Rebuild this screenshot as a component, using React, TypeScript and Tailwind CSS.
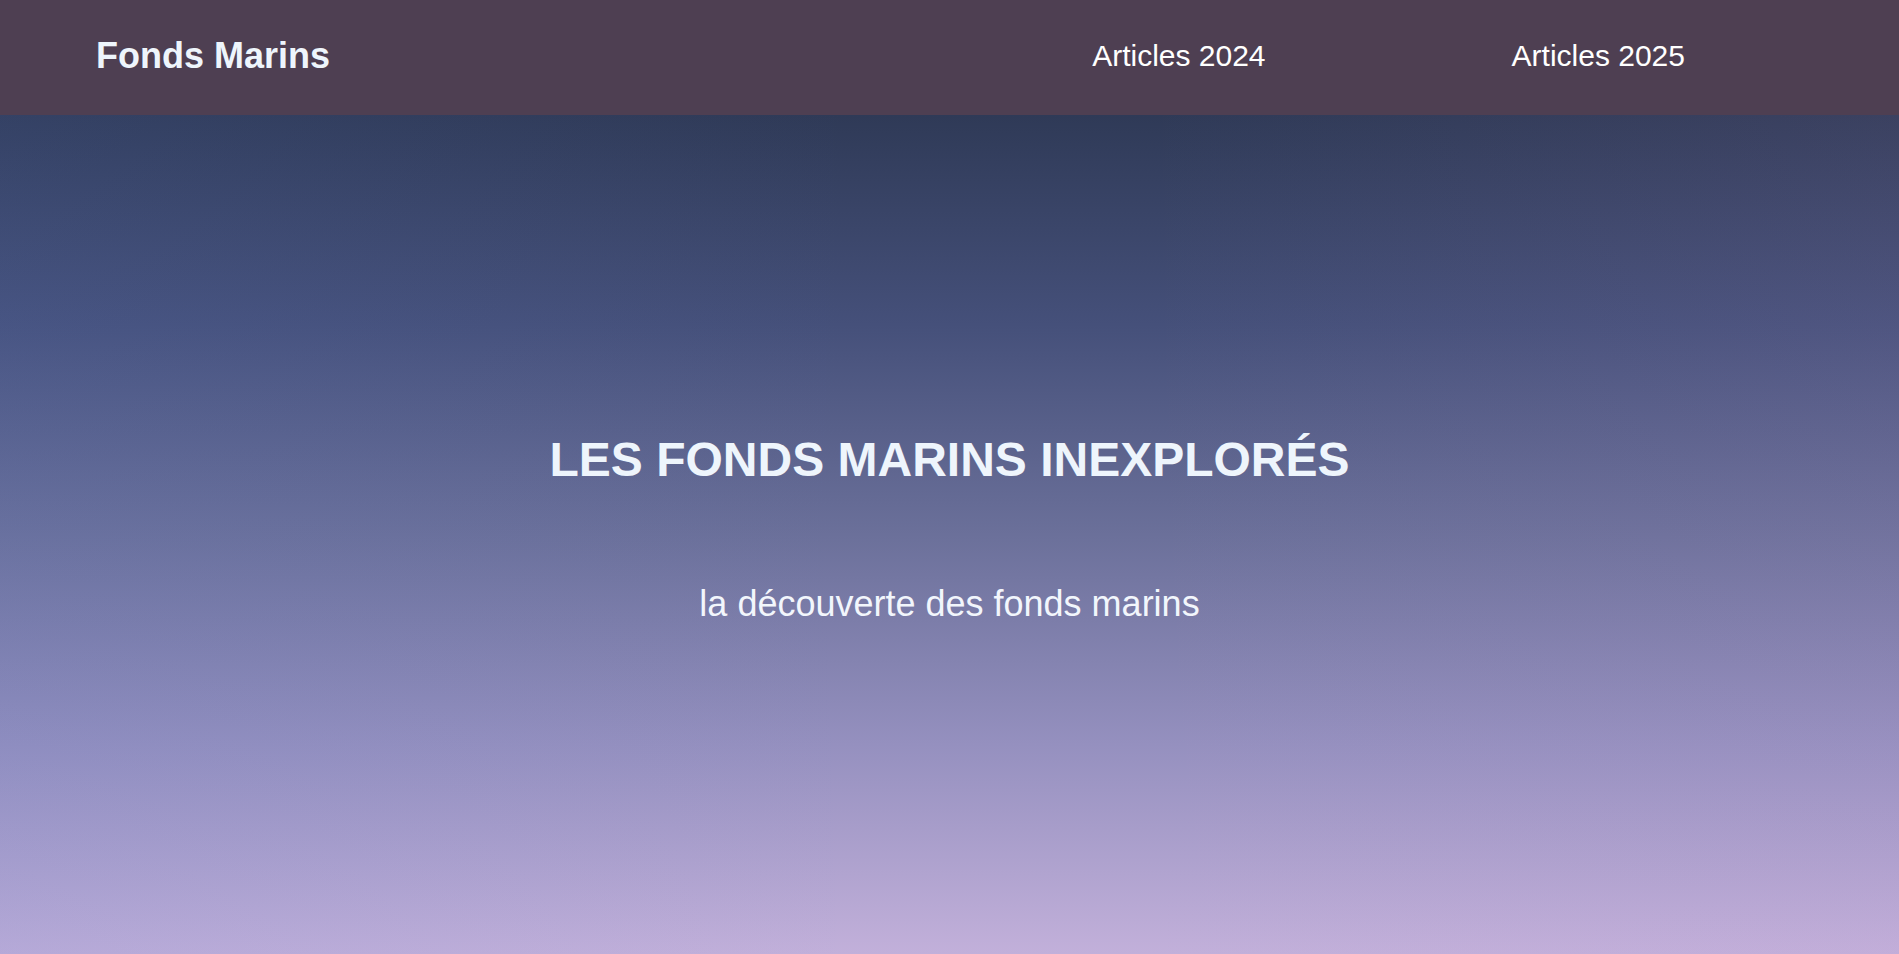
export default function App() {
  return (
    <div className="min-h-screen flex flex-col font-['Liberation_Sans',Arial,sans-serif]">
      {/* Header */}
      <header className="h-[115px] shrink-0 bg-[#4e3f52] flex items-center justify-between pl-[96px] pr-[214px] pb-[3px]">
        <a href="#" className="text-[36px] font-bold text-[#eef5fc] leading-none">
          Fonds Marins
        </a>
        <nav className="flex items-center gap-[246px]">
          <a href="#" className="text-[30px] text-white leading-none">
            Articles 2024
          </a>
          <a href="#" className="text-[30px] text-white leading-none">
            Articles 2025
          </a>
        </nav>
      </header>

      {/* Hero */}
      <main className="relative flex-1 h-[839px] flex flex-col items-center justify-center gap-[102px] pb-[12px] bg-[linear-gradient(180deg,#2f3a57_0%,#45507a_25%,#6b709a_50%,#9590bf_75%,#c2b0da_100%)]">
        <div className="absolute inset-0 bg-[linear-gradient(90deg,rgba(90,120,200,0.12)_0%,rgba(90,120,200,0)_45%,rgba(200,150,210,0)_60%,rgba(200,150,210,0.08)_100%)]" />
        <h1 className="relative text-[48px] font-bold text-[#eef5fc] leading-none">
          LES FONDS MARINS INEXPLORÉS
        </h1>
        <p className="relative text-[36px] text-[#f2f6fc] leading-none">
          la découverte des fonds marins
        </p>
      </main>
    </div>
  );
}
